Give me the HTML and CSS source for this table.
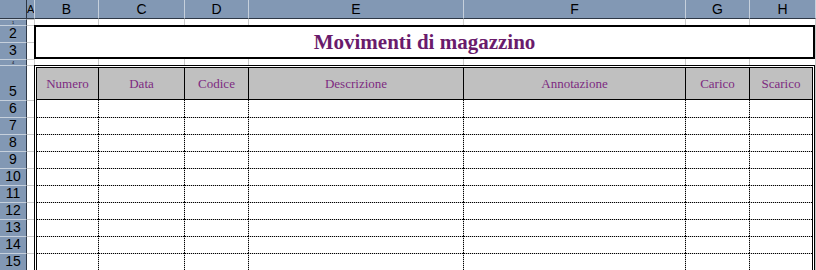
FILE: index.html
```html
<!DOCTYPE html>
<html lang="it">
<head>
<meta charset="utf-8">
<title>Movimenti di magazzino</title>
<link rel="stylesheet" href="styles.css">
</head>
<body>
<div class="sheet">
  <div class="colhdr">
    <div class="ch corner"></div>
    <div class="ch ca">A</div>
    <div class="ch wb">B</div>
    <div class="ch wc">C</div>
    <div class="ch wd">D</div>
    <div class="ch we">E</div>
    <div class="ch wf">F</div>
    <div class="ch wg">G</div>
    <div class="ch wh">H</div>
    <div class="ch cend"></div>
  </div>
  <div class="body">
    <div class="rownums">
      <div class="rh h6 tiny"><span>1</span></div>
      <div class="rh h17"><span>2</span></div>
      <div class="rh h17"><span>3</span></div>
      <div class="rh h6 tiny"><span>4</span></div>
      <div class="rh h35"><span>5</span></div>
      <div class="rh h17"><span>6</span></div>
      <div class="rh h17"><span>7</span></div>
      <div class="rh h17"><span>8</span></div>
      <div class="rh h17"><span>9</span></div>
      <div class="rh h17"><span>10</span></div>
      <div class="rh h17"><span>11</span></div>
      <div class="rh h17"><span>12</span></div>
      <div class="rh h17"><span>13</span></div>
      <div class="rh h17"><span>14</span></div>
      <div class="rh h17"><span>15</span></div>
    </div>
    <div class="cola">
      <div class="ga h6"></div>
      <div class="ga h17"></div>
      <div class="ga h17"></div>
      <div class="ga h6"></div>
      <div class="ga h35"></div>
      <div class="ga h17"></div>
      <div class="ga h17"></div>
      <div class="ga h17"></div>
      <div class="ga h17"></div>
      <div class="ga h17"></div>
      <div class="ga h17"></div>
      <div class="ga h17"></div>
      <div class="ga h17"></div>
      <div class="ga h17"></div>
      <div class="ga h17"></div>
    </div>
    <div class="main">
      <div class="strip">
        <div class="gc wb"></div><div class="gc wc"></div><div class="gc wd"></div><div class="gc we"></div><div class="gc wf"></div><div class="gc wg"></div><div class="gc wh"></div>
      </div>
      <div class="title">Movimenti di magazzino</div>
      <div class="strip">
        <div class="gc wb"></div><div class="gc wc"></div><div class="gc wd"></div><div class="gc we"></div><div class="gc wf"></div><div class="gc wg"></div><div class="gc wh"></div>
      </div>
      <div class="tbl">
        <div class="thead">
          <div class="th">Numero</div>
          <div class="th">Data</div>
          <div class="th">Codice</div>
          <div class="th">Descrizione</div>
          <div class="th">Annotazione</div>
          <div class="th">Carico</div>
          <div class="th">Scarico</div>
        </div>
        <div class="tr"><div class="td"></div><div class="td"></div><div class="td"></div><div class="td"></div><div class="td"></div><div class="td"></div><div class="td"></div></div>
        <div class="tr"><div class="td"></div><div class="td"></div><div class="td"></div><div class="td"></div><div class="td"></div><div class="td"></div><div class="td"></div></div>
        <div class="tr"><div class="td"></div><div class="td"></div><div class="td"></div><div class="td"></div><div class="td"></div><div class="td"></div><div class="td"></div></div>
        <div class="tr"><div class="td"></div><div class="td"></div><div class="td"></div><div class="td"></div><div class="td"></div><div class="td"></div><div class="td"></div></div>
        <div class="tr"><div class="td"></div><div class="td"></div><div class="td"></div><div class="td"></div><div class="td"></div><div class="td"></div><div class="td"></div></div>
        <div class="tr"><div class="td"></div><div class="td"></div><div class="td"></div><div class="td"></div><div class="td"></div><div class="td"></div><div class="td"></div></div>
        <div class="tr"><div class="td"></div><div class="td"></div><div class="td"></div><div class="td"></div><div class="td"></div><div class="td"></div><div class="td"></div></div>
        <div class="tr"><div class="td"></div><div class="td"></div><div class="td"></div><div class="td"></div><div class="td"></div><div class="td"></div><div class="td"></div></div>
        <div class="tr"><div class="td"></div><div class="td"></div><div class="td"></div><div class="td"></div><div class="td"></div><div class="td"></div><div class="td"></div></div>
        <div class="tr"><div class="td"></div><div class="td"></div><div class="td"></div><div class="td"></div><div class="td"></div><div class="td"></div><div class="td"></div></div>
      </div>
    </div>
    <div class="edge"></div>
  </div>
</div>
</body>
</html>
```

FILE: styles.css
```css
* { box-sizing: border-box; }

html, body {
  margin: 0;
  padding: 0;
  background: #ffffff;
}

.sheet {
  width: 816px;
  height: 270px;
  overflow: hidden;
  font-family: "Liberation Sans", Arial, sans-serif;
  color: #000;
}

/* column header row */
.colhdr {
  display: flex;
  height: 19px;
}
.ch {
  height: 19px;
  flex: none;
  background: #8298b4;
  border-left: 1px solid #c6d0dc;
  border-bottom: 1px solid #2e3846;
  font-size: 14px;
  line-height: 17px;
  padding-top: 1px;
  text-align: center;
  overflow: hidden;
  white-space: nowrap;
}
.ch.corner {
  width: 27px;
  border-left: none;
  border-right: 1px solid #2e3846;
}
.ch.ca {
  width: 7px;
  border-left: none;
  text-align: left;
  padding-left: 0;
  font-size: 11px;
  letter-spacing: -1px;
}
.ch.cend { width: 1px; }

.wb { width: 64px; }
.wc { width: 86px; }
.wd { width: 64px; }
.we { width: 215px; }
.wf { width: 222px; }
.wg { width: 64px; }
.wh { width: 66px; }

.h6 { height: 6px; }
.h17 { height: 17px; }
.h35 { height: 35px; }

/* sheet body */
.body {
  display: flex;
  height: 251px;
}

.rownums {
  width: 27px;
  flex: none;
  display: flex;
  flex-direction: column;
}
.rh {
  flex: none;
  display: flex;
  align-items: flex-end;
  justify-content: center;
  overflow: hidden;
  background: #8298b4;
  border-top: 1px solid #c6d0dc;
  border-right: 1px solid #2e3846;
  font-size: 14px;
}
.rh span {
  line-height: 17px;
  flex: none;
}
.rh.tiny {
  align-items: center;
}
.rh.tiny span {
  font-size: 4px;
  line-height: 4px;
}

.cola {
  width: 7px;
  flex: none;
  display: flex;
  flex-direction: column;
}
.ga {
  flex: none;
  border-top: 1px solid #cacaca;
}

.main {
  width: 781px;
  flex: none;
  display: flex;
  flex-direction: column;
}

.strip {
  display: flex;
  height: 6px;
  flex: none;
}
.gc {
  flex: none;
  height: 6px;
  border-left: 1px solid #cacaca;
}

.title {
  height: 34px;
  flex: none;
  border: 2px solid #000;
  display: flex;
  align-items: center;
  justify-content: center;
  font-family: "Liberation Serif", "Times New Roman", serif;
  font-weight: bold;
  font-size: 21px;
  color: #6a1b6c;
}

.tbl {
  flex: none;
  border-top: 3px double #000;
  border-left: 3px double #000;
  border-right: 3px double #000;
}

.thead,
.tr {
  display: grid;
  grid-template-columns: 61px 86px 64px 215px 222px 64px 63px;
}

.thead {
  height: 32px;
  background: #c0c0c0;
  border-bottom: 1px solid #000;
}
.th {
  display: flex;
  align-items: center;
  justify-content: center;
  font-family: "Liberation Serif", "Times New Roman", serif;
  font-size: 13px;
  color: #7d2a80;
}
.th + .th {
  border-left: 1px solid #000;
}

.tr {
  height: 17px;
}
.tr + .tr .td {
  border-top: 1px dotted #000;
  background: linear-gradient(#c8c8c8, #c8c8c8) 0 0 / 100% 1px no-repeat border-box;
}
.td + .td {
  border-left: 1px dotted #000;
  background: linear-gradient(#c8c8c8, #c8c8c8) 0 0 / 1px 100% no-repeat border-box;
}
.tr + .tr .td + .td {
  background:
    linear-gradient(#c8c8c8, #c8c8c8) 0 0 / 100% 1px no-repeat border-box,
    linear-gradient(#c8c8c8, #c8c8c8) 0 0 / 1px 100% no-repeat border-box;
}

.edge {
  width: 1px;
  flex: none;
  background: #cacaca;
}
```
